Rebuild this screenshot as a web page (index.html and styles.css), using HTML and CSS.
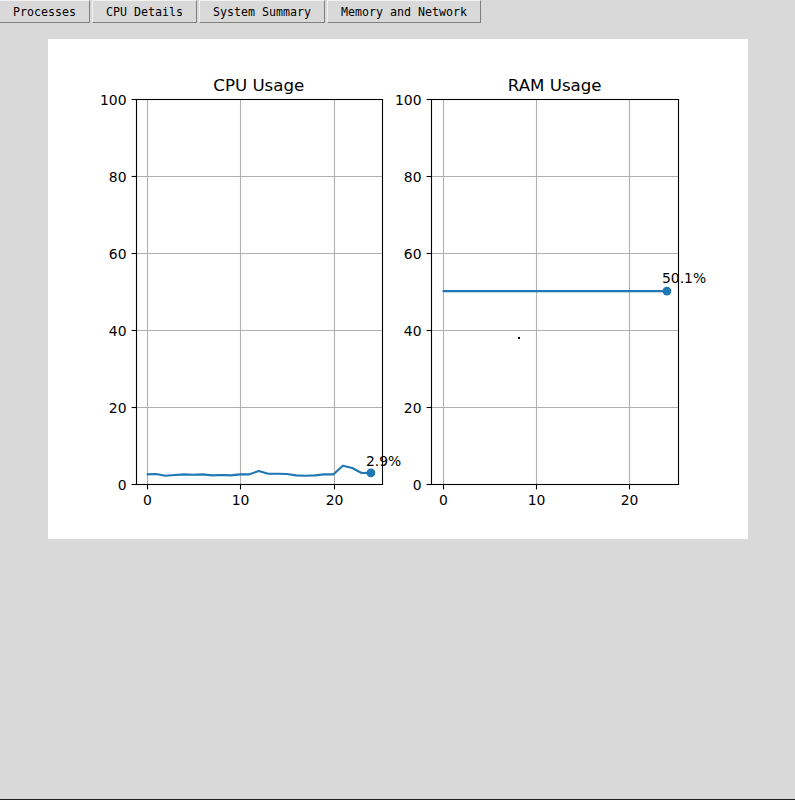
FILE: index.html
```html
<!DOCTYPE html>
<html lang="en">
<head>
<meta charset="utf-8">
<title>System Monitor</title>
<link rel="stylesheet" href="styles.css">
</head>
<body>
<div class="app">
  <nav class="tabs">
    <button class="tab">Processes</button>
    <button class="tab">CPU Details</button>
    <button class="tab">System Summary</button>
    <button class="tab">Memory and Network</button>
  </nav>
  <main class="stage">
    <div class="figure">
      <svg class="chart" width="700" height="500" viewBox="0 0 700 500" xmlns="http://www.w3.org/2000/svg">
        <!-- CPU axes grid -->
        <g class="grid">
          <line x1="99.5" y1="60" x2="99.5" y2="445"/>
          <line x1="192.5" y1="60" x2="192.5" y2="445"/>
          <line x1="286.5" y1="60" x2="286.5" y2="445"/>
          <line x1="88" y1="137.5" x2="334" y2="137.5"/>
          <line x1="88" y1="214.5" x2="334" y2="214.5"/>
          <line x1="88" y1="291.5" x2="334" y2="291.5"/>
          <line x1="88" y1="368.5" x2="334" y2="368.5"/>
          <!-- RAM axes grid -->
          <line x1="395.5" y1="60" x2="395.5" y2="445"/>
          <line x1="488.5" y1="60" x2="488.5" y2="445"/>
          <line x1="581.5" y1="60" x2="581.5" y2="445"/>
          <line x1="383" y1="137.5" x2="630" y2="137.5"/>
          <line x1="383" y1="214.5" x2="630" y2="214.5"/>
          <line x1="383" y1="291.5" x2="630" y2="291.5"/>
          <line x1="383" y1="368.5" x2="630" y2="368.5"/>
        </g>

        <!-- CPU data -->
        <svg x="87.5" y="60" width="246.6" height="385" viewBox="-1.2 0 26.4 100" preserveAspectRatio="none" overflow="visible">
          <polyline class="series" points="0,97.49 1,97.4 2,97.84 3,97.66 4,97.49 5,97.58 6,97.49 7,97.75 8,97.66 9,97.75 10,97.49 11,97.49 12,96.62 13,97.32 14,97.32 15,97.4 16,97.75 17,97.84 18,97.75 19,97.49 20,97.49 21,95.24 22,95.84 23,97.14 24,97.1"/>
        </svg>
        <circle class="marker" cx="322.9" cy="433.8" r="4.4"/>
        <text class="anno" x="318" y="427">2.9%</text>

        <!-- RAM data -->
        <svg x="383.4" y="60" width="246.6" height="385" viewBox="-1.2 0 26.4 100" preserveAspectRatio="none" overflow="visible">
          <polyline class="series" points="0,49.9 24,49.9"/>
        </svg>
        <circle class="marker" cx="618.9" cy="252.1" r="4.4"/>
        <text class="anno" x="614" y="244">50.1%</text>

        <rect x="470" y="298" width="2" height="2" fill="#000"/>

        <!-- spines -->
        <g class="spine">
          <rect x="88.5" y="60.5" width="246" height="385"/>
          <rect x="383.5" y="60.5" width="247" height="385"/>
        </g>

        <!-- ticks -->
        <g class="tick">
          <line x1="83.6" y1="60.5" x2="88.5" y2="60.5"/>
          <line x1="83.6" y1="137.5" x2="88.5" y2="137.5"/>
          <line x1="83.6" y1="214.5" x2="88.5" y2="214.5"/>
          <line x1="83.6" y1="291.5" x2="88.5" y2="291.5"/>
          <line x1="83.6" y1="368.5" x2="88.5" y2="368.5"/>
          <line x1="83.6" y1="445.5" x2="88.5" y2="445.5"/>
          <line x1="99.5" y1="445.5" x2="99.5" y2="450.4"/>
          <line x1="192.5" y1="445.5" x2="192.5" y2="450.4"/>
          <line x1="286.5" y1="445.5" x2="286.5" y2="450.4"/>

          <line x1="378.6" y1="60.5" x2="383.5" y2="60.5"/>
          <line x1="378.6" y1="137.5" x2="383.5" y2="137.5"/>
          <line x1="378.6" y1="214.5" x2="383.5" y2="214.5"/>
          <line x1="378.6" y1="291.5" x2="383.5" y2="291.5"/>
          <line x1="378.6" y1="368.5" x2="383.5" y2="368.5"/>
          <line x1="378.6" y1="445.5" x2="383.5" y2="445.5"/>
          <line x1="395.5" y1="445.5" x2="395.5" y2="450.4"/>
          <line x1="488.5" y1="445.5" x2="488.5" y2="450.4"/>
          <line x1="581.5" y1="445.5" x2="581.5" y2="450.4"/>
        </g>

        <!-- labels -->
        <g class="ylabel">
          <text x="78.5" y="65.5">100</text>
          <text x="78.5" y="142.5">80</text>
          <text x="78.5" y="219.5">60</text>
          <text x="78.5" y="296.5">40</text>
          <text x="78.5" y="373.5">20</text>
          <text x="78.5" y="450.5">0</text>
          <text x="373.5" y="65.5">100</text>
          <text x="373.5" y="142.5">80</text>
          <text x="373.5" y="219.5">60</text>
          <text x="373.5" y="296.5">40</text>
          <text x="373.5" y="373.5">20</text>
          <text x="373.5" y="450.5">0</text>
        </g>
        <g class="xlabel">
          <text x="99.5" y="466">0</text>
          <text x="192.5" y="466">10</text>
          <text x="286.5" y="466">20</text>
          <text x="395.5" y="466">0</text>
          <text x="488.5" y="466">10</text>
          <text x="581.5" y="466">20</text>
        </g>
        <g class="title">
          <text x="210.8" y="51.5">CPU Usage</text>
          <text x="506.7" y="51.5">RAM Usage</text>
        </g>
      </svg>
    </div>
  </main>
</div>
</body>
</html>
```
FILE: styles.css
```css
html, body {
  margin: 0;
  padding: 0;
}

body {
  background: #d9d9d9;
}

.app {
  height: 800px;
  box-sizing: border-box;
  border-bottom: 1px solid #1e1e1e;
}

.tabs {
  display: flex;
  gap: 2px;
  margin-left: -1px;
}

.tab {
  height: 23px;
  box-sizing: border-box;
  margin: 0;
  padding: 1px 13px 0;
  background: #d9d9d9;
  border: 1px solid;
  border-color: #f2f2f2 #7f7f7f #7f7f7f #f2f2f2;
  border-radius: 0;
  font-family: "DejaVu Sans Mono", "Liberation Mono", monospace;
  font-size: 11.63px;
  line-height: 20px;
  color: #000;
  white-space: nowrap;
}

.stage {
  padding: 16px 0 0 48px;
}

.figure {
  width: 700px;
  height: 500px;
  background: #fff;
}

.chart {
  display: block;
  font-family: "DejaVu Sans", sans-serif;
}

.grid line {
  stroke: #b0b0b0;
  stroke-width: 1.1;
}

.series {
  fill: none;
  stroke: #1f77b4;
  stroke-width: 2.1;
  stroke-linejoin: round;
  vector-effect: non-scaling-stroke;
}

.marker {
  fill: #1f77b4;
}

.spine rect {
  fill: none;
  stroke: #000;
  stroke-width: 1.1;
}

.tick line {
  stroke: #000;
  stroke-width: 1.1;
}

.ylabel text {
  font-size: 13.9px;
  text-anchor: end;
  fill: #000;
}

.xlabel text {
  font-size: 13.9px;
  text-anchor: middle;
  fill: #000;
}

.anno {
  font-size: 13.9px;
  fill: #000;
}

.title text {
  font-size: 16.67px;
  text-anchor: middle;
  fill: #000;
}
```
